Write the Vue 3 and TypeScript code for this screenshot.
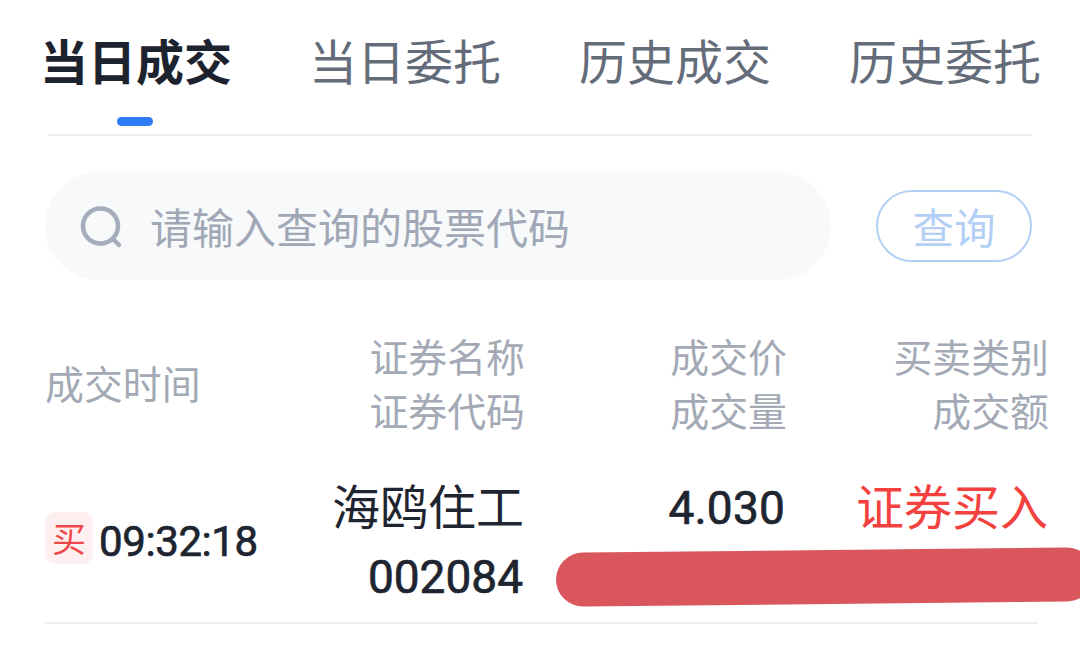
<script setup lang="ts">
const tabs = ['当日成交', '当日委托', '历史成交', '历史委托']
</script>

<template>
  <div class="page">
    <nav class="tabs">
      <div v-for="(t, i) in tabs" :key="t" class="tab" :class="{ active: i === 0 }">
        {{ t }}
      </div>
    </nav>
    <div class="search">
      <div class="input">
        <svg class="icon" width="44" height="44" viewBox="0 0 44 44" fill="none">
          <circle cx="20.5" cy="21" r="17.5" stroke="#a3adbb" stroke-width="4.5" />
          <path d="M33 34l6 6" stroke="#a3adbb" stroke-width="4.5" stroke-linecap="round" />
        </svg>
        <span class="placeholder">请输入查询的股票代码</span>
      </div>
      <button class="query">查询</button>
    </div>
    <div class="head">
      <div class="c1">成交时间</div>
      <div class="c2">证券名称<br />证券代码</div>
      <div class="c3">成交价<br />成交量</div>
      <div class="c4">买卖类别<br />成交额</div>
    </div>
    <div class="row">
      <div class="c1 time"><span class="badge">买</span><span class="num clock">09:32:18</span></div>
      <div class="c2"><div class="cell cjk">海鸥住工</div><div class="cell num code">002084</div></div>
      <div class="c3"><div class="cell num price">4.030</div><div class="cell"></div></div>
      <div class="c4"><div class="cell cjk buy">证券买入</div><div class="cell"></div></div>
      <div class="mask"></div>
    </div>
  </div>
</template>

<style>
body { margin: 0; background: #fff; overflow: hidden; }
</style>

<style scoped>
.page {
  width: 1080px;
  height: 660px;
  box-sizing: border-box;
  position: relative;
  overflow: hidden;
  background: #fff;
  font-family: "Noto Sans CJK SC", "Noto Sans", sans-serif;
  color: #1e2530;
}
.tabs {
  display: flex;
  justify-content: space-between;
  margin: 0 48px;
  height: 136px;
  border-bottom: 2px solid #eef0f2;
  box-sizing: border-box;
}
.tab {
  position: relative;
  font-size: 48px;
  line-height: 64px;
  padding-top: 27px;
  color: #646c7a;
  white-space: nowrap;
}
.tab:nth-child(1) { margin-left: -8px; }
.tab:nth-child(2) { margin-left: -1px; }
.tab:nth-child(4) { margin-right: -9px; }
.tab.active {
  color: #1c232e;
  font-weight: 600;
}
.tab.active::after {
  content: "";
  position: absolute;
  left: 77px;
  top: 117px;
  width: 36px;
  height: 9px;
  border-radius: 5px;
  background: #2f7bf5;
}
.search {
  display: flex;
  align-items: center;
  justify-content: space-between;
  margin: 36px 48px 0 45px;
}
.input {
  width: 786px;
  height: 108px;
  border-radius: 54px;
  background: #f7f9fb;
  display: flex;
  align-items: center;
  padding-left: 35px;
  box-sizing: border-box;
}
.icon { flex: none; margin-top: 2px; }
.placeholder {
  margin-left: 26px;
  font-size: 42px;
  line-height: 56px;
  color: #a0a8b6;
  white-space: nowrap;
}
.query {
  width: 156px;
  height: 72px;
  box-sizing: border-box;
  border: 2px solid #b4cff5;
  border-radius: 36px;
  background: #fff;
  color: #b4cff5;
  font: inherit;
  font-size: 41.5px;
  padding: 0;
  line-height: 66px;
}
.head, .row {
  display: grid;
  margin-left: 45px;
}
.head {
  grid-template-columns: 281px 199px 262px 1fr;
  margin-top: 48px;
  margin-right: 31px;
  align-items: center;
  font-size: 38.9px;
  line-height: 54px;
  color: #a3a9b5;
}
.head .c2, .head .c3, .head .c4,
.row .c2, .row .c3, .row .c4 { text-align: right; }
.row {
  grid-template-columns: 280px 199px 262px 1fr;
  position: relative;
  margin-top: 32px;
  margin-right: 42px;
  height: 154px;
  border-bottom: 2px solid #eef0f2;
  align-items: start;
}
.row .c2, .row .c3, .row .c4 { padding-top: 5px; white-space: nowrap; }
.time {
  display: flex;
  align-items: center;
  align-self: center;
  margin-top: -14px;
}
.badge {
  flex: none;
  width: 48px;
  height: 52px;
  border-radius: 10px;
  background: #fef0f0;
  color: #f0484a;
  font-size: 34px;
  line-height: 52px;
  text-align: center;
  margin-right: 6px;
}
.num {
  font-family: Roboto, sans-serif;
  font-weight: 400;
  -webkit-text-stroke: 0.7px currentColor;
}
.clock { font-size: 42px; line-height: 40px; letter-spacing: -0.4px; margin-top: 8px; }
.cell { height: 69px; line-height: 69px; font-size: 48px; }
.cell.cjk { line-height: 63px; }
.cell.code, .cell.price { line-height: 71px; }
.code { font-size: 46px; margin-right: 1px; }
.price { font-size: 46px; letter-spacing: 0.2px; margin-right: 1px; }
.buy { color: #f2413e; margin-right: -10px; }
.mask {
  position: absolute;
  left: 511px;
  top: 82px;
  width: 538px;
  height: 54px;
  border-radius: 27px;
  background: #d9575c;
  transform: rotate(-0.6deg);
}
</style>
